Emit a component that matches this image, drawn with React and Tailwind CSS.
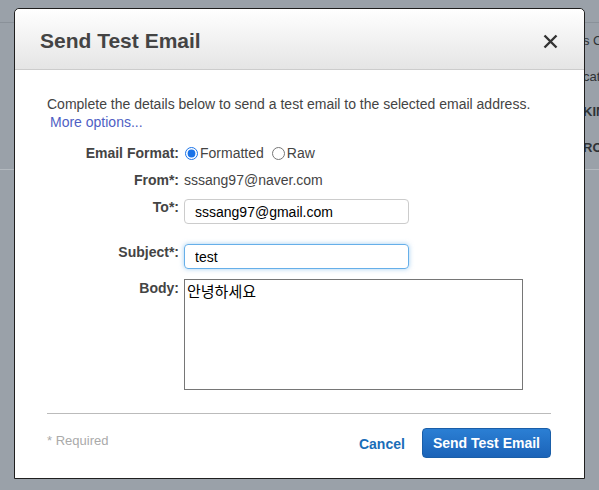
import React, { useState } from 'react';

const rows = [
    { text: 's Con', bold: false },
    { text: 'catio', bold: false },
    { text: 'KIN', bold: true },
    { text: 'ROI', bold: true },
];

const App = () => {
    const [format, setFormat] = useState('formatted');
    const [to, setTo] = useState('sssang97@gmail.com');
    const [subject, setSubject] = useState('test');
    const [body, setBody] = useState('안녕하세요');

    return (
        <div
            className="relative w-[599px] h-[490px] overflow-hidden bg-[#9aa1a9]"
            style={{ fontFamily: '"Liberation Sans", Arial, "Noto Sans CJK KR", sans-serif' }}
        >
            {/* page behind the overlay */}
            <div className="h-[23px] border-b border-[#8a9199]" />
            <div className="h-[147px] border-b border-[#b3b9bf] pl-[583px] pt-[9px] flex flex-col gap-[17.5px]">
                {rows.map((r) => (
                    <div
                        key={r.text}
                        className={`h-[18px] leading-[18px] text-[13px] text-[#2f3337] whitespace-nowrap ${r.bold ? 'font-bold' : ''}`}
                    >
                        {r.text}
                    </div>
                ))}
            </div>

            {/* dialog */}
            <div className="absolute left-[14px] top-[8px] w-[571px] h-[471px] bg-white border border-[#1f1f1f] rounded-t-[5px] flex flex-col">
                <div className="h-[61px] shrink-0 flex items-center justify-between pl-[25px] pr-[26px] rounded-t-[5px] bg-gradient-to-b from-white to-[#e5e5e5] border-b border-[#cccccc]">
                    <h2 className="text-[21px] font-bold text-[#444444] pt-[4px]">Send Test Email</h2>
                    <button className="text-[#333] pt-[4px]">
                        <svg width="15" height="15" viewBox="0 0 15 15">
                            <path d="M1.5 1.5 L13.5 13.5 M13.5 1.5 L1.5 13.5" stroke="#333" strokeWidth="2.4" strokeLinecap="butt" />
                        </svg>
                    </button>
                </div>

                <div className="flex-1 flex flex-col px-[32px] pt-[25px] text-[14px] text-[#444444]">
                    <p className="leading-[18px]">
                        Complete the details below to send a test email to the selected email address.
                    </p>
                    <a href="#" className="ml-[3px] leading-[18px] text-[#4f5fc4]">More options...</a>

                    {/* Email Format */}
                    <div className="mt-[13px] flex gap-[5px]">
                        <div className="w-[132px] h-[18px] leading-[18px] text-right font-bold">Email Format:</div>
                        <div className="h-[18px] flex items-center">
                            <label className="flex items-center gap-[2px]">
                                <input
                                    type="radio"
                                    checked={format === 'formatted'}
                                    onChange={() => setFormat('formatted')}
                                    className="w-[13px] h-[13px] m-0 ml-[1px] accent-[#1a73e8]"
                                />
                                <span>Formatted</span>
                            </label>
                            <label className="flex items-center gap-[2px] ml-[8px]">
                                <input
                                    type="radio"
                                    checked={format === 'raw'}
                                    onChange={() => setFormat('raw')}
                                    className="w-[13px] h-[13px] m-0 accent-[#1a73e8]"
                                />
                                <span>Raw</span>
                            </label>
                        </div>
                    </div>

                    {/* From */}
                    <div className="mt-[9px] flex gap-[5px] leading-[18px]">
                        <div className="w-[132px] text-right font-bold">From*:</div>
                        <div>sssang97@naver.com</div>
                    </div>

                    {/* To */}
                    <div className="mt-[10px] flex items-start gap-[5px]">
                        <div className="w-[132px] leading-[16px] text-right font-bold">To*:</div>
                        <input
                            value={to}
                            onChange={(e) => setTo(e.target.value)}
                            className="w-[225px] h-[25px] px-[10px] border border-[#cccccc] rounded-[4px] text-black outline-none"
                        />
                    </div>

                    {/* Subject */}
                    <div className="mt-[20px] flex items-start gap-[5px]">
                        <div className="w-[132px] leading-[16px] text-right font-bold">Subject*:</div>
                        <input
                            value={subject}
                            onChange={(e) => setSubject(e.target.value)}
                            className="w-[225px] h-[25px] px-[10px] border border-[#66afe9] rounded-[4px] text-black outline-none shadow-[0_0_5px_rgba(102,175,233,0.6)]"
                        />
                    </div>

                    {/* Body */}
                    <div className="mt-[10px] flex items-start gap-[5px]">
                        <div className="w-[132px] leading-[18px] text-right font-bold">Body:</div>
                        <textarea
                            value={body}
                            onChange={(e) => setBody(e.target.value)}
                            className="block w-[339px] h-[111px] p-[2px] border border-[#767676] text-[15px] leading-[18px] text-black resize-none outline-none"
                            style={{ fontFamily: '"Noto Sans CJK KR", sans-serif' }}
                        />
                    </div>

                    <div className="mt-[23px] border-t border-[#bbbbbb] w-[504px]" />

                    <div className="w-[504px] flex items-start justify-between mt-[14px]">
                        <span className="mt-[3px] text-[13px] text-[#aaaaaa]">* Required</span>
                        <div className="flex items-center gap-[17px]">
                            <button className="mt-[2px] font-bold text-[#1a6db8]">Cancel</button>
                            <button className="h-[30px] px-[10px] rounded-[4px] border border-[#1a5ea8] bg-gradient-to-b from-[#2b7fd4] to-[#1b63b8] text-white font-bold">
                                Send Test Email
                            </button>
                        </div>
                    </div>
                </div>
            </div>
        </div>
    );
};

export default App;
